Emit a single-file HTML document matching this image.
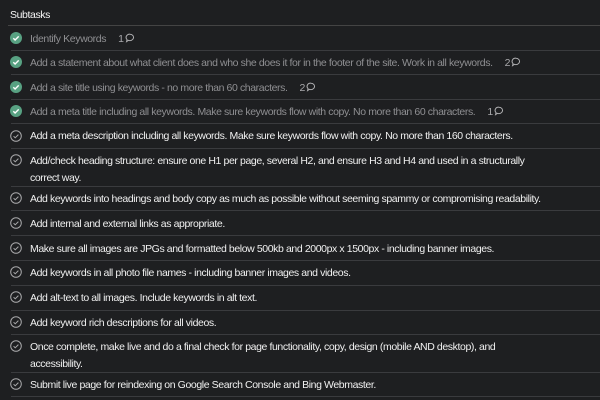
<!DOCTYPE html>
<html><head><style>
body{margin:0;width:600px;height:400px;background:#1e1f21;overflow:hidden;font-family:"Liberation Sans",sans-serif;font-size:10.5px;letter-spacing:-0.4px;color:#f0f0f0}
.h{position:absolute;left:10px;top:9px;font-size:10.5px;color:#f5f5f5}
.d{position:absolute;left:11px;right:0;height:1px;background:#3a3b3e}
.r{position:absolute;left:30px;right:10px;line-height:17px;white-space:nowrap}
.done{color:#8f8f92}
.i{position:absolute;left:10px;width:12px;height:12px}
.c{color:#a9a9ac;margin-left:12px}
.c svg{vertical-align:-1px;margin-left:1px}
</style></head><body>
<div class="h">Subtasks</div>
<div class="d" style="top:25px;left:8px;background:#444"></div>
<div class="d" style="top:50px"></div><div class="d" style="top:74px"></div><div class="d" style="top:99px"></div><div class="d" style="top:123px"></div><div class="d" style="top:148px"></div><div class="d" style="top:186px"></div><div class="d" style="top:210px"></div><div class="d" style="top:235px"></div><div class="d" style="top:260px"></div><div class="d" style="top:285px"></div><div class="d" style="top:310px"></div><div class="d" style="top:334px"></div><div class="d" style="top:372px"></div><div class="d" style="top:396px"></div>

<svg width="0" height="0" style="position:absolute"><defs>
<symbol id="g" viewBox="0 0 12 12"><circle cx="6" cy="6" r="6" fill="#58a182"/><path d="M3.3 6.2l1.8 1.8 3.6-3.6" stroke="#fff" stroke-width="1.4" fill="none"/></symbol>
<symbol id="o" viewBox="0 0 12 12"><circle cx="6" cy="6" r="5.3" fill="none" stroke="#a8a8aa" stroke-width="1"/><path d="M3.6 6.2l1.6 1.6 3.2-3.2" stroke="#a8a8aa" stroke-width="1" fill="none"/></symbol>
<symbol id="m" viewBox="0 0 10 10"><path d="M5 1.2a3.6 3.2 0 1 1-1.6 6.1L1.6 8.6l.5-2A3.6 3.2 0 0 1 5 1.2z" fill="none" stroke="#b0b0b2" stroke-width="1"/></symbol>
</defs></svg>

<svg class="i" style="top:32px"><use href="#g"/></svg><div class="r done" style="top:31px">Identify Keywords<span class="c">1<svg width="10" height="10"><use href="#m"/></svg></span></div>
<svg class="i" style="top:56px"><use href="#g"/></svg><div class="r done" style="top:55px">Add a statement about what client does and who she does it for in the footer of the site. Work in all keywords.<span class="c">2<svg width="10" height="10"><use href="#m"/></svg></span></div>
<svg class="i" style="top:81px"><use href="#g"/></svg><div class="r done" style="top:80px">Add a site title using keywords - no more than 60 characters.<span class="c">2<svg width="10" height="10"><use href="#m"/></svg></span></div>
<svg class="i" style="top:105px"><use href="#g"/></svg><div class="r done" style="top:104px">Add a meta title including all keywords. Make sure keywords flow with copy. No more than 60 characters.<span class="c">1<svg width="10" height="10"><use href="#m"/></svg></span></div>
<svg class="i" style="top:130px"><use href="#o"/></svg><div class="r" style="top:128px">Add a meta description including all keywords. Make sure keywords flow with copy. No more than 160 characters.</div>
<svg class="i" style="top:154px"><use href="#o"/></svg><div class="r" style="top:153px">Add/check heading structure: ensure one H1 per page, several H2, and ensure H3 and H4 and used in a structurally<br>correct way.</div>
<svg class="i" style="top:192px"><use href="#o"/></svg><div class="r" style="top:191px">Add keywords into headings and body copy as much as possible without seeming spammy or compromising readability.</div>
<svg class="i" style="top:217px"><use href="#o"/></svg><div class="r" style="top:216px">Add internal and external links as appropriate.</div>
<svg class="i" style="top:242px"><use href="#o"/></svg><div class="r" style="top:241px">Make sure all images are JPGs and formatted below 500kb and 2000px x 1500px - including banner images.</div>
<svg class="i" style="top:266px"><use href="#o"/></svg><div class="r" style="top:265px">Add keywords in all photo file names - including banner images and videos.</div>
<svg class="i" style="top:291px"><use href="#o"/></svg><div class="r" style="top:290px">Add alt-text to all images. Include keywords in alt text.</div>
<svg class="i" style="top:316px"><use href="#o"/></svg><div class="r" style="top:315px">Add keyword rich descriptions for all videos.</div>
<svg class="i" style="top:340px"><use href="#o"/></svg><div class="r" style="top:339px">Once complete, make live and do a final check for page functionality, copy, design (mobile AND desktop), and<br>accessibility.</div>
<svg class="i" style="top:378px"><use href="#o"/></svg><div class="r" style="top:377px">Submit live page for reindexing on Google Search Console and Bing Webmaster.</div>
</body></html>
